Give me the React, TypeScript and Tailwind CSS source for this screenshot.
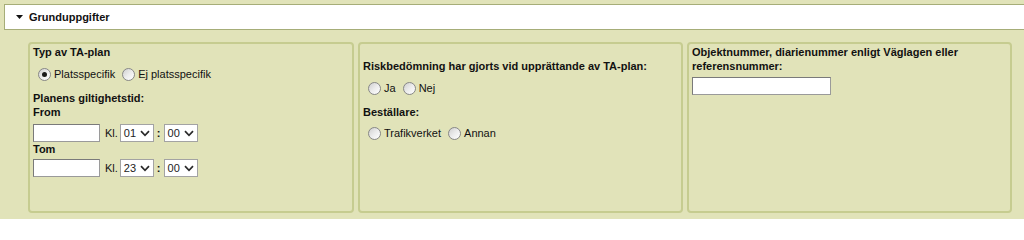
import React from "react";

function Radio({ checked, label }: { checked?: boolean; label: string }) {
  return (
    <span className="inline-flex items-center">
      <span className="ml-[5px] mr-[3px] flex h-[13px] w-[13px] items-center justify-center rounded-full border border-[#878787] bg-linear-to-br from-[#cfcfcf] via-[#ececec] to-white">
        {checked && <span className="h-[5px] w-[5px] rounded-full bg-[#1a1a1a]" />}
      </span>
      <span>{label}</span>
    </span>
  );
}

function Chevron() {
  return (
    <svg width="10" height="7" viewBox="0 0 10 7" className="shrink-0">
      <path d="M1 1.2 L5 5.3 L9 1.2" fill="none" stroke="#2a2a2a" strokeWidth="1.7" />
    </svg>
  );
}

function Select({ value }: { value: string }) {
  return (
    <span className="flex h-[18px] w-[34px] items-center justify-between border border-[#a3a3a3] bg-white pl-[3px] pr-[3px] text-[11px] leading-none text-[#222]">
      <span>{value}</span>
      <Chevron />
    </span>
  );
}

function TimeRow({ hour }: { hour: string }) {
  return (
    <div className="flex h-[18px] items-center">
      <span className="h-[18px] w-[67px] border border-[#9a9a9a] border-t-[#7a7a7a] border-l-[#7a7a7a] bg-white" />
      <span className="ml-[5px] mr-[2px]">Kl.</span>
      <Select value={hour} />
      <span className="mx-[3px] font-bold">:</span>
      <Select value="00" />
    </div>
  );
}

export default function App() {
  return (
    <div
      className="h-[219px] w-[1024px] overflow-hidden bg-[#e1e3b9] text-[11px] leading-[14px] text-[#111]"
      style={{ fontFamily: '"Liberation Sans", Arial, sans-serif' }}
    >
      <div className="pl-[4px] pt-[4px]">
        <div className="flex h-[26px] w-[1030px] items-center border border-[#a6ad78] bg-white">
          <svg width="7" height="4" viewBox="0 0 7 4" className="ml-[11px] mr-[6px]">
            <path d="M0 0 H7 L3.5 4 Z" fill="#111" />
          </svg>
          <span className="font-bold">Grunduppgifter</span>
        </div>
      </div>

      <div className="ml-[28px] mt-[12px] flex gap-[4px]">
        <div className="h-[171px] w-[326px] rounded-[4px] border-2 border-[#c6cc90] px-[3px] pt-[1px]">
          <div className="h-[14px] font-bold">Typ av TA-plan</div>
          <div className="mt-[5px] flex h-[20px] items-center">
            <Radio checked label="Platsspecifik" />
            <span className="w-[2px]" />
            <Radio label="Ej platsspecifik" />
          </div>
          <div className="mt-[7px] h-[14px] font-bold">Planens giltighetstid:</div>
          <div className="h-[14px] font-bold">From</div>
          <div className="mt-[5px]">
            <TimeRow hour="01" />
          </div>
          <div className="h-[14px] font-bold">Tom</div>
          <div className="mt-[3px]">
            <TimeRow hour="23" />
          </div>
        </div>

        <div className="h-[171px] w-[325px] rounded-[4px] border-2 border-[#c6cc90] px-[3px] pt-[1px]">
          <div className="h-[14px]" />
          <div className="h-[14px] font-bold">Riskbedömning har gjorts vid upprättande av TA-plan:</div>
          <div className="mt-[5px] flex h-[20px] items-center">
            <Radio label="Ja" />
            <span className="w-[2px]" />
            <Radio label="Nej" />
          </div>
          <div className="mt-[7px] h-[14px] font-bold">Beställare:</div>
          <div className="mt-[4px] flex h-[20px] items-center">
            <Radio label="Trafikverket" />
            <span className="w-[2px]" />
            <Radio label="Annan" />
          </div>
        </div>

        <div className="h-[171px] w-[325px] rounded-[4px] border-2 border-[#c6cc90] px-[3px] pt-[1px]">
          <div className="font-bold">Objektnummer, diarienummer enligt Väglagen eller referensnummer:</div>
          <div className="mt-[4px] h-[18px] w-[139px] border border-[#9a9a9a] border-t-[#7a7a7a] border-l-[#7a7a7a] bg-white" />
        </div>
      </div>
    </div>
  );
}
